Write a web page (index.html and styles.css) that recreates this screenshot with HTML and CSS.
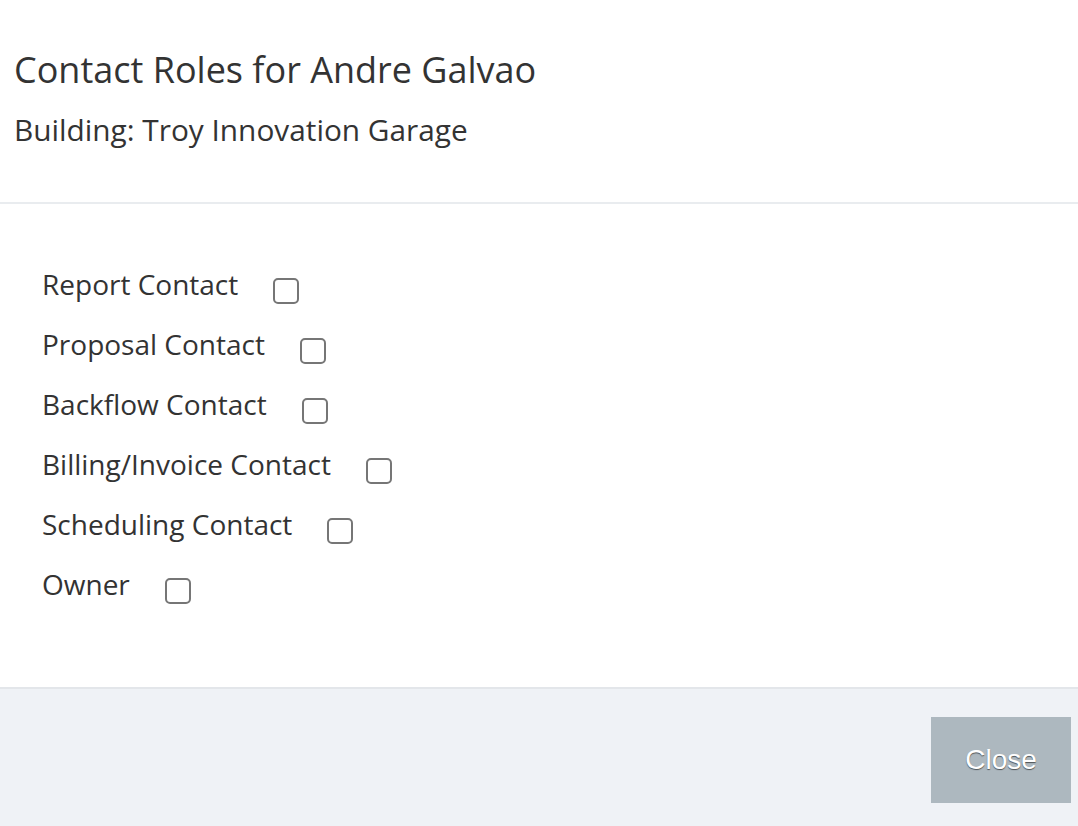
FILE: index.html
```html
<!DOCTYPE html>
<html>
<head>
  <meta charset="UTF-8">
  <title>Contact Roles</title>
  <link rel="stylesheet" href="styles.css">
</head>
<body>
  <div class="modal">
    <div class="modal-header">
      <h1>Contact Roles for Andre Galvao</h1>
      <h2>Building: Troy Innovation Garage</h2>
    </div>
    <div class="modal-body">
      <label class="role-row"><span>Report Contact</span><input type="checkbox"></label>
      <label class="role-row"><span>Proposal Contact</span><input type="checkbox"></label>
      <label class="role-row"><span>Backflow Contact</span><input type="checkbox"></label>
      <label class="role-row"><span>Billing/Invoice Contact</span><input type="checkbox"></label>
      <label class="role-row"><span>Scheduling Contact</span><input type="checkbox"></label>
      <label class="role-row"><span>Owner</span><input type="checkbox"></label>
    </div>
    <div class="modal-footer">
      <button class="btn-close">Close</button>
    </div>
  </div>
</body>
</html>
```

FILE: styles.css
```css
* {
  margin: 0;
  padding: 0;
  box-sizing: border-box;
}

html, body {
  height: 100%;
  background: #ffffff;
  font-family: 'Open Sans', 'Noto Sans', sans-serif;
  color: #333333;
  overflow: hidden;
}

.modal {
  height: 100vh;
  display: flex;
  flex-direction: column;
}

.modal-header {
  height: 204px;
  padding: 46px 14px 0;
  border-bottom: 2px solid #e9ecef;
}

.modal-header h1 {
  font-size: 36px;
  font-weight: 400;
  line-height: 48px;
}

.modal-header h2 {
  font-size: 29.8px;
  font-weight: 400;
  line-height: 40px;
  margin-top: 16px;
}

.modal-body {
  flex: 1;
  display: flex;
  flex-direction: column;
  gap: 20px;
  padding: 60px 42px 0;
}

.role-row {
  display: flex;
  align-items: center;
  gap: 35px;
  height: 40px;
  font-size: 28px;
}

.role-row input {
  appearance: none;
  width: 26px;
  height: 26px;
  border: 2px solid #767676;
  border-radius: 5px;
  background: #ffffff;
  margin-top: 14px;
}

.modal-footer {
  height: 139px;
  background: #eff2f6;
  border-top: 2px solid #e3e6ea;
  display: flex;
  justify-content: flex-end;
  align-items: flex-start;
  padding: 28px 7px 0 0;
}

.btn-close {
  width: 140px;
  height: 86px;
  border: none;
  background: #adb8bf;
  color: #ffffff;
  font-family: 'Liberation Sans', Arial, sans-serif;
  font-size: 28px;
  text-shadow: 0 1px 1px rgba(0, 0, 0, 0.55);
}
```
